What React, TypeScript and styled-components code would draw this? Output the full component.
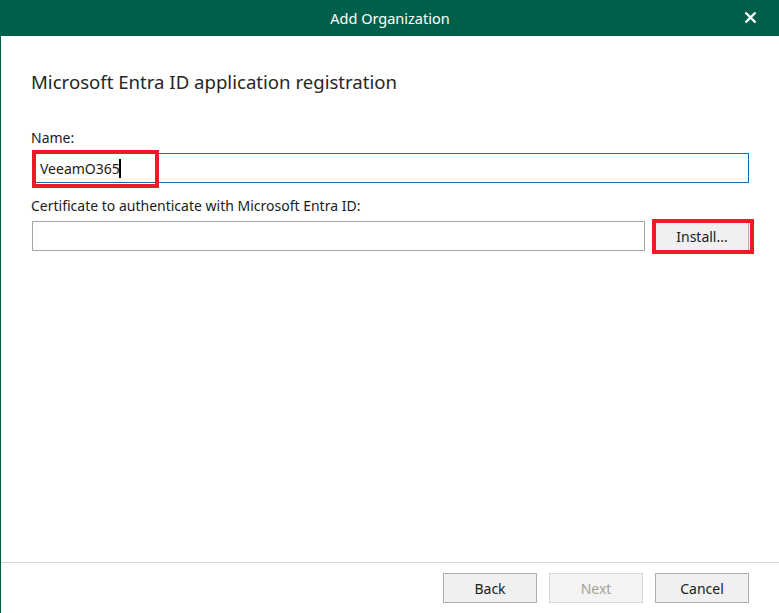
import React from 'react'
import styled, { createGlobalStyle } from 'styled-components'

const GlobalStyle = createGlobalStyle`
  * {
    box-sizing: border-box;
  }
  html, body {
    margin: 0;
    padding: 0;
    height: 100%;
    background: #fff;
  }
  #root {
    height: 100%;
  }
`

const green = '#005f4b'
const uiFont = `"Noto Sans", "Open Sans", sans-serif`

const Window = styled.div`
  height: 613px;
  display: flex;
  flex-direction: column;
  border-left: 1px solid ${green};
  font-family: ${uiFont};
  color: #1b1b1b;
`

const TitleBar = styled.div`
  height: 36px;
  flex: none;
  background: ${green};
  color: #fff;
  display: flex;
  align-items: center;
  justify-content: center;
  position: relative;
  font-size: 14.5px;
`

const CloseButton = styled.div`
  position: absolute;
  right: 22px;
  top: 11px;
  width: 13px;
  height: 13px;
  display: flex;
`

const Content = styled.div`
  flex: 1;
  padding: 32px 30px 0 30px;
  display: flex;
  flex-direction: column;
`

const Heading = styled.h1`
  margin: 0 0 33px 0;
  font-size: 18.6px;
  font-weight: 400;
  line-height: 28px;
  color: #262626;
`

const Label = styled.div`
  margin: 0 0 6px 0;
  font-size: 14px;
  line-height: 18px;
`

const Field = styled.div`
  position: relative;
  display: flex;
  gap: 10px;
  margin-bottom: 14px;
  padding-left: 1px;
`

const TextBox = styled.div<{ focused?: boolean; width?: string }>`
  height: 30px;
  width: ${({ width }) => width || '100%'};
  border: 1px solid ${({ focused }) => (focused ? '#1a6bb0' : '#a4a4a4')};
  display: flex;
  align-items: center;
  padding-left: 7px;
  font-size: 14px;
`

const Caret = styled.span`
  display: inline-block;
  width: 2px;
  height: 19px;
  margin-left: -1px;
  background: #000;
  vertical-align: middle;
`

const Highlight = styled.div<{ left: number; top: number; w: number; h: number }>`
  position: absolute;
  left: ${({ left }) => left}px;
  top: ${({ top }) => top}px;
  width: ${({ w }) => w}px;
  height: ${({ h }) => h}px;
  border: 4px solid #ed1c24;
  pointer-events: none;
`

const Button = styled.button<{ disabled?: boolean }>`
  width: 94px;
  height: 30px;
  flex: none;
  font-family: ${uiFont};
  font-size: 14px;
  background: ${({ disabled }) => (disabled ? '#f4f4f4' : '#f0f0f0')};
  border: 1px solid ${({ disabled }) => (disabled ? '#d6d6d6' : '#adadad')};
  color: ${({ disabled }) => (disabled ? '#a7a195' : '#1b1b1b')};
  padding: 0;
  cursor: default;
`

const Footer = styled.div`
  flex: none;
  height: 51px;
  border-top: 1px solid #d4d4d4;
  display: flex;
  justify-content: flex-end;
  align-items: flex-start;
  gap: 12px;
  padding: 10px 30px 0 0;
`

export default function App(): JSX.Element {
  return (
    <>
      <GlobalStyle />
      <Window>
        <TitleBar>
          Add Organization
          <CloseButton>
            <svg width="13" height="13" viewBox="0 0 13 13">
              <path d="M1.5 1.5 L11.5 11.5 M11.5 1.5 L1.5 11.5" stroke="#fff" strokeWidth="2.4" />
            </svg>
          </CloseButton>
        </TitleBar>
        <Content>
          <Heading>Microsoft Entra ID application registration</Heading>
          <Label>Name:</Label>
          <Field>
            <TextBox focused>
              VeeamO365
              <Caret />
            </TextBox>
            <Highlight left={1} top={-3} w={127} h={38} />
          </Field>
          <Label>Certificate to authenticate with Microsoft Entra ID:</Label>
          <Field>
            <TextBox width="614px" />
            <Button>Install...</Button>
            <Highlight left={621} top={-2} w={102} h={35} />
          </Field>
        </Content>
        <Footer>
          <Button>Back</Button>
          <Button disabled>Next</Button>
          <Button>Cancel</Button>
        </Footer>
      </Window>
    </>
  )
}
